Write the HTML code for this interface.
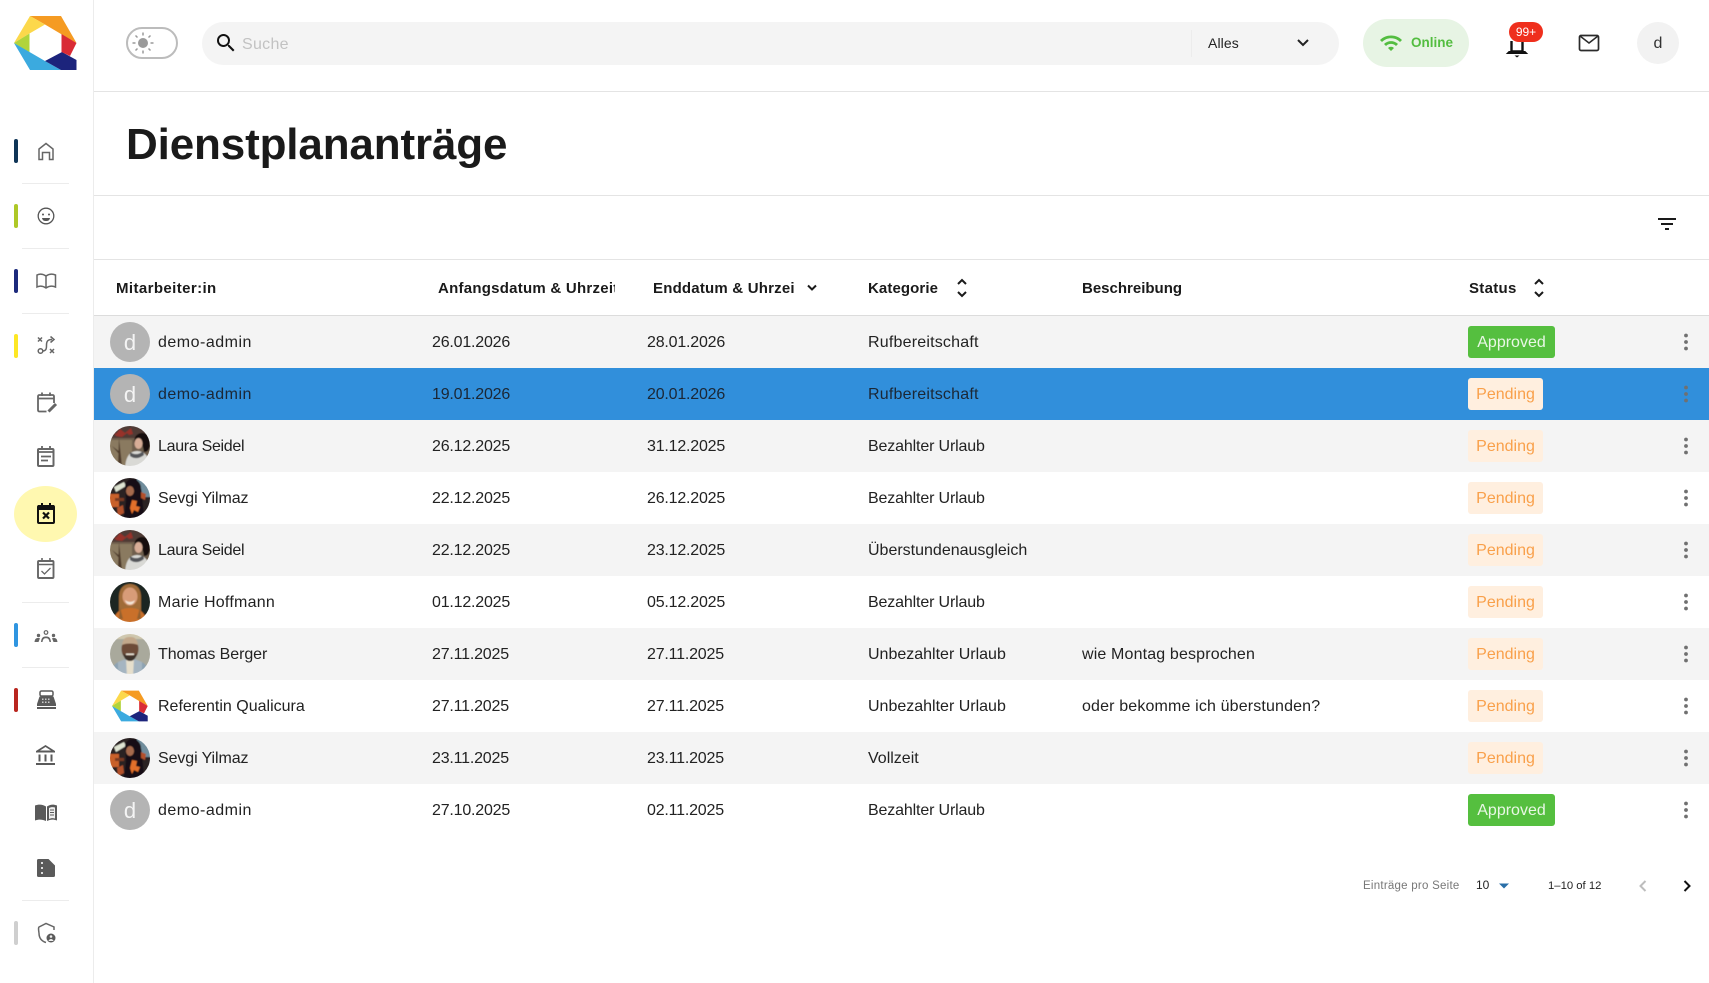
<!DOCTYPE html>
<html lang="de"><head><meta charset="utf-8"><title>Dienstplananträge</title>
<style>
html,body{margin:0;padding:0;background:#fff}
body{width:1709px;height:983px;position:relative;overflow:hidden;font-family:"Liberation Sans",sans-serif;color:#222;font-size:16px}
.a{position:absolute;white-space:nowrap}
.hl{position:absolute;left:94px;right:0;height:1px;background:#e4e4e4}
.th{position:absolute;top:260px;height:55px;line-height:57px;font-weight:bold;font-size:15px;color:#1a1a1a;white-space:nowrap;overflow:hidden}
.row{position:absolute;left:94px;width:1615px;height:52px;line-height:54px}
.g{background:#f4f4f4}.b{background:#318fdb}
.row span{position:absolute;white-space:nowrap;top:0}
.n{left:64px}.d1{left:338px;letter-spacing:-.2px}.d2{left:553px;letter-spacing:-.2px}.k{left:774px}.t{left:988px;letter-spacing:.15px}
.p{top:10px!important;left:1374px;height:32px;line-height:33px;border-radius:3px;text-align:center;font-size:16px}
.ap{width:87px;background:#55bf3f;color:#e9f7e5}
.pe{width:75px;background:#ffefdf;color:#f9a04a}
.av{position:absolute;left:16px;top:6px;width:40px;height:40px;display:block}
.dv{position:absolute;left:16px;top:6px;width:40px;height:40px;border-radius:50%;background:#b4b4b4;color:#f4f4f4;font-size:22px;line-height:42px;text-align:center}
.dots{position:absolute;left:1590px;top:17px;width:4px;height:18px;display:block}
svg{display:block}
</style></head><body>
<svg width="0" height="0" style="position:absolute"><defs>
<clipPath id="c"><circle cx="20" cy="20" r="20"/></clipPath>
<filter id="bl" filterUnits="userSpaceOnUse" x="-5" y="-5" width="50" height="50"><feGaussianBlur stdDeviation=".4"/></filter>
<symbol id="laura" viewBox="0 0 40 40"><g clip-path="url(#c)"><g filter="url(#bl)"><rect x="-5" y="-5" width="50" height="50" fill="#6f5f4e"/><rect x="-5" y="-5" width="50" height="17" fill="#4f3a35"/><path d="M3 5l3 3 4-5 5 4 6-5 2 6-4 1-2-2-5 4-6-1z" fill="#97302b"/><path d="M-5 14h27v31H-5z" fill="#8a7a60"/><path d="M9 12l3 28h-4zM2 20l8 6-1 2z" fill="#4d3a2c"/><path d="M15 45c0-13 4-20 12-20s14 7 14 20z" fill="#d9d9d5"/><path d="M20 26c4 3 9 3 13-1l1 4c-5 4-10 4-14 1z" fill="#55565a"/><path d="M25 19c-2-7 1-11 6-12s9 4 9 10-2 9-6 9c-1-6-2-9-5-11-1 1-3 3-4 4z" fill="#15100f"/><ellipse cx="28.500" cy="17.500" rx="4" ry="5.500" fill="#d8ad97"/></g></g></symbol>
<symbol id="sevgi" viewBox="0 0 40 40"><g clip-path="url(#c)"><g filter="url(#bl)"><rect x="-5" y="-5" width="50" height="50" fill="#2a2324"/><rect x="27" y="-5" width="18" height="24" fill="#6f8d9c"/><path d="M4 9l10-5 2 4-10 6z" fill="#dfe4d3"/><path d="M-3 16h12v13H-3z" fill="#c9612a"/><path d="M15 9c0-5 4-8 8-8s8 4 8 9c2 9 1 16 4 32H13c2-9 3-16 3-22z" fill="#161112"/><ellipse cx="20" cy="13" rx="4" ry="5" fill="#a66b4d"/><path d="M22 22l5 1-1 5 4 1-2 5-4-2-2 4-2-6z" fill="#e2702a"/><path d="M7 30l6-3 1 8-6 3zM31 14l5 2-1 6-4-2z" fill="#b3512a"/><path d="M5 20h9v3H5z" fill="#7a3a24"/></g></g></symbol>
<symbol id="marie" viewBox="0 0 40 40"><g clip-path="url(#c)"><g filter="url(#bl)"><rect x="-5" y="-5" width="50" height="50" fill="#1d2621"/><path d="M9 36V15C9 5 15 2 20 2s11 3 11 13v21z" fill="#a06c38"/><ellipse cx="20" cy="14.500" rx="7.500" ry="9" fill="#d89c78"/><path d="M15 18c3 2.500 7 2.500 10 0-1 3-2.500 4.500-5 4.500s-4-1.500-5-4.500z" fill="#f2e6d8"/><path d="M2 45c1-13 7-19 18-19s17 6 18 19z" fill="#c9702c"/><path d="M10 25l3 12h-4zM30 25l-3 12h4z" fill="#93602e"/></g></g></symbol>
<symbol id="thomas" viewBox="0 0 40 40"><g clip-path="url(#c)"><g filter="url(#bl)"><rect x="-5" y="-5" width="50" height="50" fill="#a9a99c"/><rect x="-5" y="-5" width="50" height="10" fill="#cfc7ae"/><path d="M1 45c0-14 4-18 19-20 15 2 19 6 19 20z" fill="#8da3b3"/><path d="M15 26h10l2 18H13z" fill="#e6dfcc"/><path d="M8 28l8-3 1 18H8zM32 28l-8-3-1 18h9z" fill="#a5b5c1"/><ellipse cx="20" cy="15" rx="8.500" ry="11" fill="#6d4c39"/><path d="M12 11c1-7 4-8 8-8s7 1 8 8c-4-2-12-2-16 0z" fill="#c2a88b"/><path d="M13 19c3 4 11 4 14 0-1 5-3 8-7 8s-6-3-7-8z" fill="#3c3029"/><rect x="16" y="19.500" width="8" height="1.500" fill="#e8e3d6"/></g></g></symbol>
<symbol id="logo" viewBox="14 15 63 56"><path d="M30 16 61 16 76.500 43 61 34 45 24.500z" fill="#f59b22"/><path d="M30 16 45 24.500 29.500 33.500 14 43z" fill="#fcd84b"/><path d="M14 43 29.500 33.500V52.500z" fill="#b1d43b"/><path d="M14 43 45 61 61 70H30z" fill="#3baadf"/><path d="M45 61 62 52 76.500 60V70H61z" fill="#1c247c"/><path d="M61.500 34 76.500 43 70 56 61.500 52z" fill="#d92b35"/></symbol>
</defs></svg>

<!-- sidebar -->
<div class="a" style="left:93px;top:0;width:1px;height:983px;background:#ececec"></div>
<svg class="a" style="left:0;top:0" width="93" height="983" viewBox="0 0 93 983">
<use href="#logo" x="14" y="15" width="63" height="56"/>
<g fill="#ececec"><rect x="22" y="183" width="47" height="1"/><rect x="22" y="248" width="47" height="1"/><rect x="22" y="313" width="47" height="1"/><rect x="22" y="602" width="47" height="1"/><rect x="22" y="667" width="47" height="1"/><rect x="22" y="900" width="47" height="1"/></g>
<rect x="14" y="139" width="4" height="24" rx="2" fill="#0f3557"/>
<rect x="14" y="204" width="4" height="24" rx="2" fill="#aec827"/>
<rect x="14" y="269" width="4" height="24" rx="2" fill="#1c2a7c"/>
<rect x="14" y="334" width="4" height="24" rx="2" fill="#fde725"/>
<rect x="14" y="623" width="4" height="24" rx="2" fill="#2f95e0"/>
<rect x="14" y="688" width="4" height="24" rx="2" fill="#b9261f"/>
<rect x="14" y="921" width="4" height="24" rx="2" fill="#cfcfcf"/>
<ellipse cx="45.500" cy="514" rx="31.500" ry="28" fill="#fff8b0"/>
<g fill="none" stroke="#666" stroke-width="1.500">
<path d="M39 159.500V149L46 143.500 53 149V159.500H49.500V152.500H42.500V159.500Z"/>
<circle cx="46" cy="216" r="7.800" stroke="#555" stroke-width="1.300"/>
<path d="M37 275C40 273.500 43 274 46 276 49 274 52 273.500 55.500 275V287C52 285.500 49 286 46 288 43 286 40 285.500 37 287ZM46 276V288"/>
<path d="M42.500 351C47 351 46.500 347 46.500 345 46.500 341 48 339.500 52 339.500"/>
<circle cx="40.500" cy="351" r="2.300"/>
<path d="M50.500 336.500 54 339.500 50.500 342.500" />
<path d="M38 337.500 42 341.500M42 337.500 38 341.500M50 349 54 353M54 349 50 353" stroke-width="1.500"/>
<path d="M54 403V396.500Q54 395 52.500 395H39.500Q38 395 38 396.500V410Q38 411.500 39.500 411.500H46.500M42 392.500V396M50 392.500V396M38 398.500H54" stroke-width="1.800"/>
<path d="M48.500 411.500 56 404" stroke-width="3"/>
<rect x="38" y="449" width="15.500" height="17" rx="1" stroke-width="2"/>
<path d="M42 446V450M50 446V450M38 452H54" stroke-width="1.800"/>
<path d="M41 456.500H51M41 460.500H48" stroke-width="1.800"/>
<rect x="38" y="561" width="15.500" height="17" rx="1" stroke-width="1.900"/>
<path d="M42 558V562M50 558V562M38 564.500H54" stroke-width="1.600"/>
<path d="M41.500 571 44.500 574 50.500 568" stroke-width="1.300"/>
<path d="M39 933C38 927 39 927 39 927L46 923.500 54 927V930M46 942.500C41 941 39 938 39 933" stroke-width="1.500"/>
</g>
<g fill="#555"><circle cx="43" cy="214.500" r="1"/><circle cx="49" cy="214.500" r="1"/><path d="M42 218H50C49.500 220.500 48 221 46 221S42.500 220.500 42 218Z"/></g>
<!-- active calendar -->
<rect x="38" y="506" width="16" height="17" rx="1" fill="#fff8b0" stroke="#111" stroke-width="2"/>
<rect x="38" y="505" width="16" height="5" fill="#111"/><path d="M42 503V507M50 503V507" stroke="#111" stroke-width="2"/>
<path d="M43 512.500 49 518.500M49 512.500 43 518.500" stroke="#111" stroke-width="2.200"/>
<!-- groups -->
<g fill="#666"><circle cx="46" cy="632.500" r="1.800" fill="none" stroke="#666" stroke-width="1.200"/><path d="M41 642C41.500 637.500 43 636.500 46 636.500S50.500 637.500 51 642H49.500C49 639 48 638.300 46 638.300S43 639 42.500 642Z"/><circle cx="38.500" cy="635.500" r="1.700"/><circle cx="53.500" cy="635.500" r="1.700"/><path d="M34.500 642C35 638.500 36 638 38.500 638L40 638.300 38.500 642ZM57.500 642C57 638.500 56 638 53.500 638L52 638.300 53.500 642Z"/></g>
<!-- register -->
<g fill="#5a5a5a"><rect x="40" y="691" width="13" height="5" rx="1.500" fill="none" stroke="#5a5a5a" stroke-width="1.500"/><path d="M39.500 696.500H53.500L56 704V706H37V704Z"/><rect x="37" y="707" width="19" height="2"/></g>
<g fill="#ccc"><rect x="42" y="698.500" width="1.500" height="1.500"/><rect x="45" y="698.500" width="1.500" height="1.500"/><rect x="48" y="698.500" width="1.500" height="1.500"/><rect x="42" y="701.500" width="1.500" height="1.500"/><rect x="45" y="701.500" width="1.500" height="1.500"/><rect x="48" y="701.500" width="1.500" height="1.500"/></g>
<!-- bank -->
<g fill="#5a5a5a"><path d="M45.500 745 55 751V752.500H36V751ZM45.500 747 40 750.500H51Z" fill-rule="evenodd"/><rect x="38.500" y="754.500" width="2" height="7"/><rect x="44.500" y="754.500" width="2" height="7"/><rect x="50.500" y="754.500" width="2" height="7"/><rect x="36" y="763" width="19" height="2"/></g>
<!-- book2 -->
<path d="M35 805.500C39 804 43 804.500 46 806.500V821C43 819.500 39 819 35 820.500Z" fill="#5a5a5a"/>
<path d="M47 806.500C50 804.500 53 804 57 805.500V820.500C53 819 50 819.500 47 821Z" fill="#5a5a5a"/>
<path d="M49 808C51 807 53 807 55 807.500V818.500C53 818 51 818 49 819Z" fill="#eee"/>
<path d="M50 810H54M50 812.500H54M50 815H54" stroke="#5a5a5a" stroke-width="1"/>
<!-- doc -->
<path d="M38.500 859H48.500L55 865.500V875.500C55 876.500 54.500 877 53.500 877H38.500C37.500 877 37 876.500 37 875.500V860.500C37 859.500 37.500 859 38.500 859Z" fill="#5a5a5a"/>
<path d="M48.500 858.500 55.500 858.500V865.500H48.500Z" fill="#fff"/><path d="M48.500 859 55 865.500H48.500Z" fill="#5a5a5a"/><g fill="#ddd"><rect x="41" y="862" width="2" height="2"/><rect x="41" y="867" width="2" height="2"/><rect x="41" y="872" width="2" height="2"/></g>
<circle cx="51" cy="938" r="4.500" fill="#5a5a5a"/><circle cx="51" cy="936.500" r="1.300" fill="#eee"/><path d="M48.500 941C49 939.500 50 939 51 939S53 939.500 53.500 941Z" fill="#eee"/>
</svg>

<!-- topbar -->
<div class="hl" style="top:91px"></div>
<div class="hl" style="top:195px"></div>
<div class="hl" style="top:259px"></div>
<div class="hl" style="top:315px;background:#dcdcdc"></div>

<div class="a" style="left:126px;top:27px;width:48px;height:28px;border:2px solid #bcbcbc;border-radius:17px"></div>
<svg class="a" style="left:131px;top:31px" width="24" height="24" viewBox="0 0 24 24"><circle cx="12" cy="12" r="5" fill="#9a9a9a"/><path d="M12 1.500V4.500M12 19.500V22.500M1.500 12H4.500M19.500 12H22.500M4.500 4.500 6.500 6.500M17.500 17.500 19.500 19.500M4.500 19.500 6.500 17.500M17.500 6.500 19.500 4.500" stroke="#9a9a9a" stroke-width="1.500"/></svg>

<div class="a" style="left:202px;top:22px;width:1137px;height:43px;background:#f4f4f4;border-radius:22px"></div>
<svg class="a" style="left:214px;top:31px" width="24" height="24" viewBox="0 0 24 24"><path fill="#111" d="M15.500 14h-.79l-.28-.27A6.471 6.471 0 0 0 16 9.500 6.500 6.500 0 1 0 9.500 16c1.610 0 3.090-.59 4.230-1.570l.27.28v.79l5 4.990L20.490 19l-4.990-5zm-6 0C7.010 14 5 11.990 5 9.500S7.010 5 9.500 5 14 7.010 14 9.500 11.990 14 9.500 14z"/></svg>
<div class="a" style="left:242px;top:23px;line-height:43px;color:#c2c2c2;font-size:16px;letter-spacing:.3px">Suche</div>
<div class="a" style="left:1191px;top:30px;width:1px;height:27px;background:#ececec"></div>
<div class="a" style="left:1208px;top:22px;line-height:43px;font-size:14px;letter-spacing:.1px">Alles</div>
<svg class="a" style="left:1296px;top:38px" width="14" height="10" viewBox="0 0 14 10"><path d="M2 2 7 7 12 2" fill="none" stroke="#222" stroke-width="2"/></svg>

<div class="a" style="left:1363px;top:19px;width:106px;height:48px;background:#e7f4e4;border-radius:24px"></div>
<svg class="a" style="left:1379px;top:31px" width="24" height="24" viewBox="0 0 24 24"><path fill="#53bd40" d="M1 9l2 2c4.970-4.970 13.030-4.970 18 0l2-2C16.930 2.930 7.080 2.930 1 9zm8 8l3 3 3-3c-1.650-1.660-4.340-1.660-6 0zm-4-4l2 2c2.760-2.760 7.240-2.760 10 0l2-2C15.140 9.140 8.870 9.140 5 13z"/></svg>
<div class="a" style="left:1411px;top:19px;line-height:47px;font-weight:bold;font-size:13.500px;color:#53bd40">Online</div>

<svg class="a" style="left:1505px;top:32px" width="24" height="26" viewBox="0 0 24 26"><path d="M6.500 9V19.500H17.500V9" fill="none" stroke="#111" stroke-width="2.400"/><path d="M2 21.500H22L20 19.500H4Z" fill="#111" stroke="#111" stroke-width="1"/><path d="M9.500 23.500H14.500L12 25.500Z" fill="#111"/></svg>
<div class="a" style="left:1509px;top:22px;width:34px;height:20px;background:#ef2f1d;border-radius:10px;color:#fff;font-size:12px;line-height:20px;text-align:center">99+</div>

<svg class="a" style="left:1578px;top:34px" width="22" height="18" viewBox="0 0 22 18"><rect x="1.500" y="1.500" width="19" height="15" rx="1.500" fill="none" stroke="#2b2b2b" stroke-width="1.700"/><path d="M2 2 11 9 20 2" fill="none" stroke="#2b2b2b" stroke-width="1.500"/></svg>
<div class="a" style="left:1637px;top:22px;width:42px;height:42px;border-radius:50%;background:#f2f2f2;text-align:center;line-height:43px;color:#333">d</div>

<div class="a" style="left:126px;top:119px;font-size:44px;line-height:52px;font-weight:bold;color:#1a1a1a;letter-spacing:-.15px">Dienstplananträge</div>

<svg class="a" style="left:1658px;top:218px" width="18" height="14" viewBox="0 0 18 14"><path fill="#1a1a1a" d="M0 0H18V2H0ZM3 5H15V7H3ZM7 10H11V12H7Z"/></svg>

<!-- header -->
<div class="th" style="left:116px;width:280px;letter-spacing:.4px">Mitarbeiter:in</div>
<div class="th" style="left:438px;width:177px;letter-spacing:.25px">Anfangsdatum &amp; Uhrzeit</div>
<div class="th" style="left:653px;width:141px;letter-spacing:.2px">Enddatum &amp; Uhrzeit</div>
<div class="th" style="left:868px;letter-spacing:.1px">Kategorie</div>
<div class="th" style="left:1082px">Beschreibung</div>
<div class="th" style="left:1469px;letter-spacing:.3px">Status</div>
<svg class="a" style="left:806px;top:284px" width="12" height="8" viewBox="0 0 12 8"><path d="M2 1.500 6 5.500 10 1.500" fill="none" stroke="#1a1a1a" stroke-width="2"/></svg>
<svg class="a" style="left:956px;top:277px" width="12" height="22" viewBox="0 0 12 22"><path d="M2 7 6 3 10 7M2 15 6 19 10 15" fill="none" stroke="#1a1a1a" stroke-width="2"/></svg>
<svg class="a" style="left:1533px;top:277px" width="12" height="22" viewBox="0 0 12 22"><path d="M2 7 6 3 10 7M2 15 6 19 10 15" fill="none" stroke="#1a1a1a" stroke-width="2"/></svg>

<!-- rows -->
<div class="row g" style="top:316px"><div class="dv">d</div><span class="n" style="letter-spacing:.5px">demo-admin</span><span class="d1">26.01.2026</span><span class="d2">28.01.2026</span><span class="k" style="letter-spacing:.2px">Rufbereitschaft</span><span class="p ap">Approved</span><svg class="dots" viewBox="0 0 4 18"><g fill="#707070"><circle cx="2" cy="2.500" r="1.900"/><circle cx="2" cy="9" r="1.900"/><circle cx="2" cy="15.500" r="1.900"/></g></svg></div>

<div class="row b" style="top:368px;color:#1b2735"><div class="dv">d</div><span class="n" style="letter-spacing:.5px">demo-admin</span><span class="d1">19.01.2026</span><span class="d2">20.01.2026</span><span class="k" style="letter-spacing:.2px">Rufbereitschaft</span><span class="p pe">Pending</span><svg class="dots" viewBox="0 0 4 18"><g fill="#707070"><circle cx="2" cy="2.500" r="1.900"/><circle cx="2" cy="9" r="1.900"/><circle cx="2" cy="15.500" r="1.900"/></g></svg></div>

<div class="row g" style="top:420px"><svg class="av" viewBox="0 0 40 40"><use href="#laura"/></svg><span class="n" style="letter-spacing:-.3px">Laura Seidel</span><span class="d1">26.12.2025</span><span class="d2">31.12.2025</span><span class="k" style="letter-spacing:-.15px">Bezahlter Urlaub</span><span class="p pe">Pending</span><svg class="dots" viewBox="0 0 4 18"><g fill="#707070"><circle cx="2" cy="2.500" r="1.900"/><circle cx="2" cy="9" r="1.900"/><circle cx="2" cy="15.500" r="1.900"/></g></svg></div>

<div class="row" style="top:472px"><svg class="av" viewBox="0 0 40 40"><use href="#sevgi"/></svg><span class="n" style="letter-spacing:-.1px">Sevgi Yilmaz</span><span class="d1">22.12.2025</span><span class="d2">26.12.2025</span><span class="k" style="letter-spacing:-.15px">Bezahlter Urlaub</span><span class="p pe">Pending</span><svg class="dots" viewBox="0 0 4 18"><g fill="#707070"><circle cx="2" cy="2.500" r="1.900"/><circle cx="2" cy="9" r="1.900"/><circle cx="2" cy="15.500" r="1.900"/></g></svg></div>

<div class="row g" style="top:524px"><svg class="av" viewBox="0 0 40 40"><use href="#laura"/></svg><span class="n" style="letter-spacing:-.3px">Laura Seidel</span><span class="d1">22.12.2025</span><span class="d2">23.12.2025</span><span class="k">Überstundenausgleich</span><span class="p pe">Pending</span><svg class="dots" viewBox="0 0 4 18"><g fill="#707070"><circle cx="2" cy="2.500" r="1.900"/><circle cx="2" cy="9" r="1.900"/><circle cx="2" cy="15.500" r="1.900"/></g></svg></div>

<div class="row" style="top:576px"><svg class="av" viewBox="0 0 40 40"><use href="#marie"/></svg><span class="n" style="letter-spacing:.25px">Marie Hoffmann</span><span class="d1">01.12.2025</span><span class="d2">05.12.2025</span><span class="k" style="letter-spacing:-.15px">Bezahlter Urlaub</span><span class="p pe">Pending</span><svg class="dots" viewBox="0 0 4 18"><g fill="#707070"><circle cx="2" cy="2.500" r="1.900"/><circle cx="2" cy="9" r="1.900"/><circle cx="2" cy="15.500" r="1.900"/></g></svg></div>

<div class="row g" style="top:628px"><svg class="av" viewBox="0 0 40 40"><use href="#thomas"/></svg><span class="n" style="letter-spacing:-.08px">Thomas Berger</span><span class="d1">27.11.2025</span><span class="d2">27.11.2025</span><span class="k">Unbezahlter Urlaub</span><span class="t">wie Montag besprochen</span><span class="p pe">Pending</span><svg class="dots" viewBox="0 0 4 18"><g fill="#707070"><circle cx="2" cy="2.500" r="1.900"/><circle cx="2" cy="9" r="1.900"/><circle cx="2" cy="15.500" r="1.900"/></g></svg></div>

<div class="row" style="top:680px"><svg class="av" viewBox="0 0 40 40"><use href="#logo" x="2" y="4" width="36" height="32"/></svg><span class="n">Referentin Qualicura</span><span class="d1">27.11.2025</span><span class="d2">27.11.2025</span><span class="k">Unbezahlter Urlaub</span><span class="t">oder bekomme ich überstunden?</span><span class="p pe">Pending</span><svg class="dots" viewBox="0 0 4 18"><g fill="#707070"><circle cx="2" cy="2.500" r="1.900"/><circle cx="2" cy="9" r="1.900"/><circle cx="2" cy="15.500" r="1.900"/></g></svg></div>

<div class="row g" style="top:732px"><svg class="av" viewBox="0 0 40 40"><use href="#sevgi"/></svg><span class="n" style="letter-spacing:-.1px">Sevgi Yilmaz</span><span class="d1">23.11.2025</span><span class="d2">23.11.2025</span><span class="k">Vollzeit</span><span class="p pe">Pending</span><svg class="dots" viewBox="0 0 4 18"><g fill="#707070"><circle cx="2" cy="2.500" r="1.900"/><circle cx="2" cy="9" r="1.900"/><circle cx="2" cy="15.500" r="1.900"/></g></svg></div>

<div class="row" style="top:784px"><div class="dv">d</div><span class="n" style="letter-spacing:.5px">demo-admin</span><span class="d1">27.10.2025</span><span class="d2">02.11.2025</span><span class="k" style="letter-spacing:-.15px">Bezahlter Urlaub</span><span class="p ap">Approved</span><svg class="dots" viewBox="0 0 4 18"><g fill="#707070"><circle cx="2" cy="2.500" r="1.900"/><circle cx="2" cy="9" r="1.900"/><circle cx="2" cy="15.500" r="1.900"/></g></svg></div>

<!-- pagination -->
<div class="a" style="left:1363px;top:877px;line-height:18px;font-size:11.500px;color:#777;letter-spacing:.25px">Einträge pro Seite</div>
<div class="a" style="left:1476px;top:876px;line-height:18px;font-size:12px;color:#222">10</div>
<svg class="a" style="left:1498px;top:882px" width="12" height="8" viewBox="0 0 12 8"><path d="M1 1.500H11L6 6.500Z" fill="#2a6fa8"/></svg>
<div class="a" style="left:1548px;top:877px;line-height:18px;font-size:11.300px;color:#222">1–10 of 12</div>
<svg class="a" style="left:1637px;top:878px" width="12" height="16" viewBox="0 0 12 16"><path d="M8.500 3 3.500 8 8.500 13" fill="none" stroke="#bdbdbd" stroke-width="2"/></svg>
<svg class="a" style="left:1681px;top:878px" width="12" height="16" viewBox="0 0 12 16"><path d="M3.500 3 8.500 8 3.500 13" fill="none" stroke="#111" stroke-width="2"/></svg>
</body></html>
